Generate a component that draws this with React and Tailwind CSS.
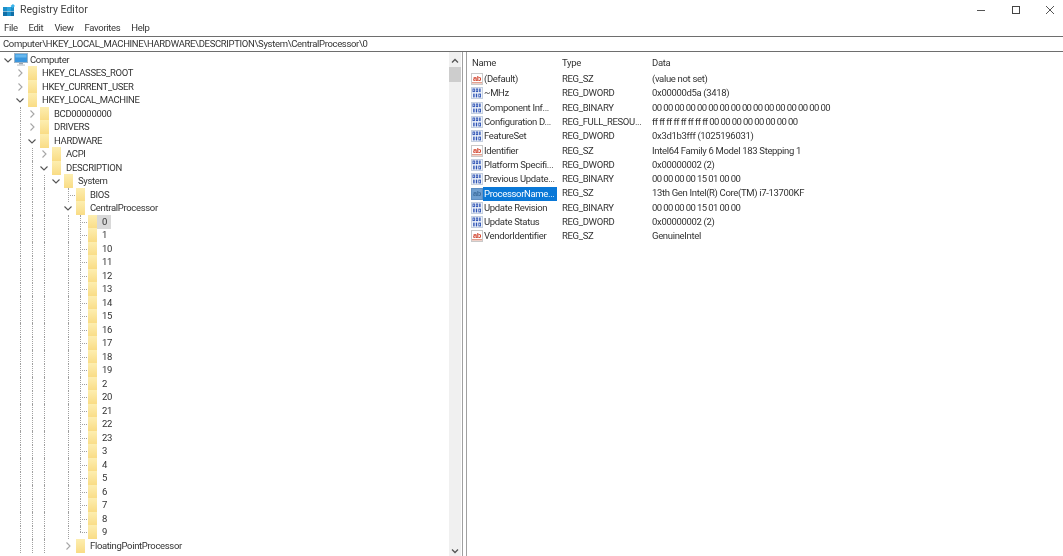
const Chevron = ({ open, light }) => (
  <svg width="10" height="10" viewBox="0 0 10 10" fill="none" stroke={light ? "#a6a6a6" : "#555"} strokeWidth="1.1">
    <path d={open ? "M1.5 3.5 L5 7 L8.5 3.5" : "M3.5 1.5 L7 5 L3.5 8.5"} />
  </svg>
);

const Folder = () => (
  <span className="block w-[9px] h-[14px] shrink-0 bg-linear-to-b from-[#fdeeb0] to-[#f9dc85]" />
);

const PcIcon = () => (
  <svg width="14" height="13" viewBox="0 0 14 13" className="shrink-0">
    <rect x="0.5" y="0.5" width="13" height="9" fill="#3a96dd" stroke="#9db5c9" />
    <rect x="1.5" y="1.5" width="11" height="3" fill="#67b7ee" />
    <rect x="5" y="10" width="4" height="1.5" fill="#9aa4ad" />
    <rect x="3" y="11.5" width="8" height="1.2" fill="#c1c8ce" />
  </svg>
);

const AbIcon = ({ sel }) => (
  <svg width="12" height="12" viewBox="0 0 12 12" className="shrink-0">
    <rect x="0.5" y="0.5" width="11" height="11" fill={sel ? "#6f9fd0" : "#fff"} stroke={sel ? "#5d8ec2" : "#c9c9c9"} />
    <text x="6" y="8" textAnchor="middle" fontSize="7.5" fontWeight="700" fill={sel ? "#3f6f9f" : "#d2452f"} fontFamily="'Liberation Sans', sans-serif">ab</text>
    {!sel && <rect x="1" y="9" width="10" height="1.5" fill="#e0a090" />}
  </svg>
);

const BinIcon = () => (
  <svg width="12" height="12" viewBox="0 0 12 12" className="shrink-0">
    <rect x="0.5" y="0.5" width="11" height="11" fill="#eef3fa" stroke="#c4cfe0" />
    <g fill="#2f54b5">
      <rect x="1.5" y="1.5" width="2.4" height="3.6" />
      <rect x="4.8" y="1.5" width="2.4" height="3.6" />
      <rect x="8.2" y="1.5" width="1.4" height="3.6" />
      <rect x="2.2" y="6.6" width="1.4" height="3.8" />
      <rect x="4.8" y="6.6" width="1.4" height="3.8" />
      <rect x="7.4" y="6.6" width="2.6" height="3.8" />
    </g>
    <rect x="2.4" y="2.5" width="0.7" height="1.6" fill="#eef3fa" />
    <rect x="5.6" y="2.5" width="0.7" height="1.6" fill="#eef3fa" />
    <rect x="8.2" y="7.6" width="0.9" height="1.8" fill="#eef3fa" />
  </svg>
);

const AppIcon = () => (
  <svg width="12" height="12" viewBox="0 0 12 12" className="shrink-0">
    <rect x="0" y="3" width="4" height="4" fill="#1b8fc9" />
    <rect x="4" y="3" width="4" height="4" fill="#2aa5df" />
    <rect x="0" y="7.5" width="4" height="4.5" fill="#0f6fa8" />
    <rect x="4" y="7.5" width="4" height="4.5" fill="#1b8fc9" />
    <rect x="8" y="7.5" width="3" height="4.5" fill="#0f6fa8" />
    <rect x="8" y="3" width="3" height="4" fill="#1b8fc9" />
    <path d="M7.5 2 L10 0 L12 2 L9.5 4 Z" fill="#39b3ea" />
  </svg>
);

const tree = [
  { d: 0, t: "Computer", c: "open", pc: true },
  { d: 1, t: "HKEY_CLASSES_ROOT", c: "closed" },
  { d: 1, t: "HKEY_CURRENT_USER", c: "closed" },
  { d: 1, t: "HKEY_LOCAL_MACHINE", c: "open" },
  { d: 2, t: "BCD00000000", c: "closed" },
  { d: 2, t: "DRIVERS", c: "closed" },
  { d: 2, t: "HARDWARE", c: "open" },
  { d: 3, t: "ACPI", c: "closed" },
  { d: 3, t: "DESCRIPTION", c: "open" },
  { d: 4, t: "System", c: "open" },
  { d: 5, t: "BIOS", dash: true },
  { d: 5, t: "CentralProcessor", c: "open" },
  ...["0","1","10","11","12","13","14","15","16","17","18","19","2","20","21","22","23","3","4","5","6","7","8","9"].map((t) => ({ d: 6, t, dash: true, sel: t === "0" })),
  { d: 5, t: "FloatingPointProcessor", c: "closed" },
];

const Guide = ({ on }) => (
  <span className="relative w-3 h-full shrink-0">
    {on && <span className="absolute left-[6px] top-0 bottom-0 border-l border-dotted border-l-[#a0a0a0]" />}
  </span>
);

const TreeRow = ({ r }) => {
  const slots = [];
  for (let i = 0; i < r.d; i++) {
    const on = (i === 1 && r.d >= 2) || (i === 2 && r.d >= 3) || (i === 3 && r.d >= 4) || (i === 5 && r.d >= 6);
    slots.push(<Guide key={i} on={on} />);
  }
  return (
    <div className="flex items-center h-[13.5px] pl-[2px] whitespace-nowrap shrink-0">
      {slots}
      <span className="relative w-3 h-full shrink-0 flex items-center justify-center">
        {r.c && <Chevron open={r.c === "open"} light={r.c === "closed"} />}
        {r.dash && (
          <>
            <span className={`absolute left-[6px] top-0 border-l border-dotted border-l-[#a0a0a0] ${r.t === "9" ? "h-1/2" : "bottom-0"}`} />
            <span className="absolute left-[6px] w-[7px] top-1/2 border-t border-dotted border-t-[#a0a0a0]" />
          </>
        )}
      </span>
      {r.pc ? (
        <span className="w-[16px] shrink-0"><PcIcon /></span>
      ) : (
        <span className={`ml-[2px] w-[14px] shrink-0 ${r.sel ? "bg-[#d9d9d9]" : ""}`}><Folder /></span>
      )}
      <span className={`h-[14px] leading-[14px] ${r.sel ? "bg-[#d9d9d9] pr-[4px]" : ""}`}>{r.t}</span>
    </div>
  );
};

const values = [
  ["(Default)", "REG_SZ", "(value not set)", "ab"],
  ["~MHz", "REG_DWORD", "0x00000d5a (3418)", "bin"],
  ["Component Inf...", "REG_BINARY", "00 00 00 00 00 00 00 00 00 00 00 00 00 00 00 00", "bin", false, true],
  ["Configuration D...", "REG_FULL_RESOU...", "ff ff ff ff ff ff ff ff 00 00 00 00 00 00 00 00", "bin"],
  ["FeatureSet", "REG_DWORD", "0x3d1b3fff (1025196031)", "bin"],
  ["Identifier", "REG_SZ", "Intel64 Family 6 Model 183 Stepping 1", "ab"],
  ["Platform Specifi...", "REG_DWORD", "0x00000002 (2)", "bin"],
  ["Previous Update...", "REG_BINARY", "00 00 00 00 15 01 00 00", "bin", false, true],
  ["ProcessorName...", "REG_SZ", "13th Gen Intel(R) Core(TM) i7-13700KF", "ab", true],
  ["Update Revision", "REG_BINARY", "00 00 00 00 15 01 00 00", "bin", false, true],
  ["Update Status", "REG_DWORD", "0x00000002 (2)", "bin"],
  ["VendorIdentifier", "REG_SZ", "GenuineIntel", "ab"],
];

export default function App() {
  return (
    <div className="flex flex-col h-[556px] w-[1063px] overflow-hidden bg-white text-[9.5px] tracking-[-0.33px] text-[#333] blur-[0.25px] font-['Roboto','Noto_Sans',sans-serif]">
      <div className="flex items-center h-[20px] shrink-0 pl-[3px]">
        <AppIcon />
        <span className="ml-[5px] text-[#444] text-[10.5px] tracking-normal">Registry Editor</span>
        <div className="ml-auto flex items-center">
          <span className="block w-[8px] border-t border-t-[#555] mr-[27px]" />
          <span className="block w-[8px] h-[8px] border border-[#444] mr-[25px]" />
          <svg width="10" height="10" viewBox="0 0 10 10" stroke="#555" strokeWidth="1" className="mr-[8px]">
            <path d="M1 1 L9 9 M9 1 L1 9" />
          </svg>
        </div>
      </div>
      <div className="flex items-center h-[16px] shrink-0 pl-[4px] gap-[11px]">
        <span>File</span><span>Edit</span><span>View</span><span>Favorites</span><span>Help</span>
      </div>
      <div className="flex items-center h-[16px] shrink-0 pl-[3px] border-y border-y-[#6e6e6e]">
        Computer\HKEY_LOCAL_MACHINE\HARDWARE\DESCRIPTION\System\CentralProcessor\0
      </div>
      <div className="flex flex-1 min-h-0">
        <div className="w-[449px] shrink-0 overflow-hidden flex flex-col pt-[1px]">
          {tree.map((r, i) => <TreeRow key={i} r={r} />)}
        </div>
        <div className="w-[12px] shrink-0 bg-[#f0f0f0] flex flex-col items-center">
          <svg width="8" height="8" viewBox="0 0 8 8" fill="none" stroke="#555" strokeWidth="1.3" className="mt-[5px]">
            <path d="M1 5.5 L4 2.5 L7 5.5" />
          </svg>
          <span className="block w-full h-[15px] bg-[#cdcdcd] mt-[2px]" />
          <svg width="8" height="8" viewBox="0 0 8 8" fill="none" stroke="#555" strokeWidth="1.3" className="mt-auto mb-[1px]">
            <path d="M1 2.5 L4 5.5 L7 2.5" />
          </svg>
        </div>
        <div className="w-[5px] shrink-0 border-x border-x-[#a0a0a0] ml-[1px]" />
        <div className="flex-1 min-w-0 flex flex-col pl-[4px]">
          <div className="flex items-center h-[20px] pt-[2px] shrink-0">
            <span className="w-[91px] pl-[1px]">Name</span>
            <span className="w-[90px]">Type</span>
            <span>Data</span>
          </div>
          {values.map(([n, t, d, ic, sel, digits], i) => (
            <div key={i} className="flex items-center h-[14.3px] shrink-0 whitespace-nowrap">
              <span className="w-[91px] flex items-center">
                {ic === "ab" ? <AbIcon sel={sel} /> : <BinIcon />}
                <span className={`px-[1px] h-[14px] leading-[14px] w-[74px] ${sel ? "bg-[#0a78d7] text-white" : ""}`}>{n}</span>
              </span>
              <span className="w-[90px]">{t}</span>
              <span className={digits || d.startsWith("ff") ? "tracking-[-0.6px]" : ""}>{d}</span>
            </div>
          ))}
        </div>
      </div>
    </div>
  );
}
